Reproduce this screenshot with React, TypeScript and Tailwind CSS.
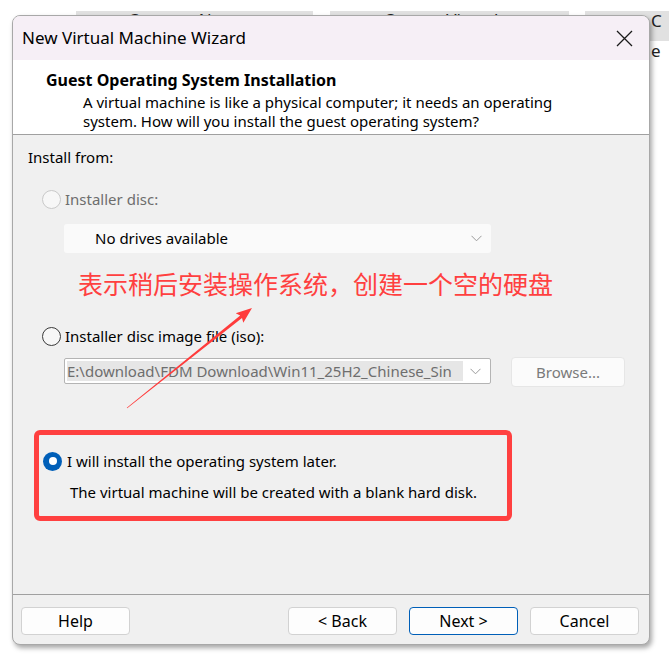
import React from "react";

function Chevron() {
  return (
    <svg width="11" height="7" viewBox="0 0 11 7" className="shrink-0">
      <path d="M0.5 0.8 L5.5 5.8 L10.5 0.8" fill="none" stroke="#9a9a9a" strokeWidth="1" />
    </svg>
  );
}

function Radio({ state }: { state: "disabled" | "off" | "on" }) {
  if (state === "on") {
    return (
      <span className="w-[19px] h-[19px] rounded-full bg-[#005fb8] flex items-center justify-center shrink-0">
        <span className="w-[8px] h-[8px] rounded-full bg-white" />
      </span>
    );
  }
  return (
    <span
      className={
        state === "disabled"
          ? "w-[19px] h-[19px] rounded-full border border-[#c9c9c9] bg-[#f7f7f7] shrink-0"
          : "w-[19px] h-[19px] rounded-full border border-[#3a3a3a] bg-[#f7f7f7] shrink-0"
      }
    />
  );
}

function Btn({ label, primary }: { label: string; primary?: boolean }) {
  return (
    <button
      className={
        primary
          ? "w-[109px] h-[28px] rounded-[4px] border border-[#005fb8] bg-[#fdfdfd] text-[16px] text-black flex items-center justify-center"
          : "w-[109px] h-[28px] rounded-[4px] border border-[#d2d2d2] bg-[#fdfdfd] text-[16px] text-black flex items-center justify-center"
      }
    >
      {label}
    </button>
  );
}

export default function App() {
  return (
    <div className="relative w-[669px] h-[666px] bg-white overflow-hidden font-['Noto_Sans','Noto_Sans_CJK_SC',sans-serif]">
      {/* background window tabs peeking above the dialog */}
      <div className="absolute top-[11px] left-[76px] w-[237px] h-[30px] bg-[#e1e1e1] text-[17px] text-[#222] leading-[18px] pl-[52px]">
        Create a New
      </div>
      <div className="absolute top-[11px] left-[330px] w-[239px] h-[30px] bg-[#e1e1e1] text-[17px] text-[#222] leading-[18px] pl-[54px]">
        Open a Virtual
      </div>
      <div className="absolute top-[11px] left-[585px] w-[84px] h-[30px] bg-[#e1e1e1]" />
      <div className="absolute top-[6px] left-[651px] text-[17px] leading-[30px] text-[#222]">
        <div>C</div>
        <div>e</div>
      </div>

      {/* dialog */}
      <div className="relative ml-[12px] mt-[15px] w-[638px] h-[630px] flex flex-col bg-[#f0f0f0] rounded-[8px] border border-[#a8a8a8] shadow-[2px_3px_5px_rgba(0,0,0,0.35)] overflow-hidden">
        <div className="h-[44px] shrink-0 bg-[#f6eff6] flex items-center justify-between pl-[9px] pr-[16px]">
          <span className="text-[17px] text-black">New Virtual Machine Wizard</span>
          <svg width="17" height="17" viewBox="0 0 17 17">
            <path d="M1 1 L16 16 M16 1 L1 16" stroke="#1a1a1a" strokeWidth="1.3" />
          </svg>
        </div>

        <div className="h-[75px] shrink-0 bg-white border-b border-[#a0a0a0] pt-[10px]">
          <div className="pl-[33px] text-[16px] font-bold leading-[20px] text-black">
            Guest Operating System Installation
          </div>
          <div className="pl-[70px] mt-[3px] text-[15px] leading-[19px] text-black">
            <div>A virtual machine is like a physical computer; it needs an operating</div>
            <div>system. How will you install the guest operating system?</div>
          </div>
        </div>

        <div className="flex-1 flex flex-col pl-[15px] pt-[12px] text-[15px] text-black">
          <div className="leading-[20px]">Install from:</div>

          <div className="mt-[21px] h-[22px] ml-[14px] flex items-center gap-[4px]">
            <Radio state="disabled" />
            <span className="text-[#6d6d6d]">Installer disc:</span>
          </div>

          <div className="mt-[14px] ml-[36px] w-[427px] h-[29px] bg-[#fafafa] rounded-[3px] flex items-center justify-between pl-[31px] pr-[9px]">
            <span>No drives available</span>
            <Chevron />
          </div>

          <div className="mt-[15px] ml-[50px] h-[30px] leading-[30px] text-[25px] text-[#ff4040] font-['Noto_Sans_CJK_SC',sans-serif]">
            表示稍后安装操作系统，创建一个空的硬盘
          </div>

          <div className="mt-[27px] h-[22px] ml-[14px] flex items-center gap-[4px]">
            <Radio state="off" />
            <span>Installer disc image file (iso):</span>
          </div>

          <div className="mt-[10px] ml-[36px] flex items-start">
            <div className="mt-[1px] w-[427px] h-[26px] bg-white border border-[#b4b4b4] rounded-[2px] flex items-center justify-between pl-[2px] pr-[9px]">
              <span className="w-[396px] h-[20px] overflow-hidden whitespace-nowrap bg-[#e6e6e6] text-[#6e6e6e] leading-[20px]">
                E:\download\FDM Download\Win11_25H2_Chinese_Sin
              </span>
              <Chevron />
            </div>
            <div className="ml-[20px] w-[114px] h-[30px] rounded-[4px] border border-[#e6e6e6] bg-[#fbfbfb] text-[#7a7a7a] flex items-center justify-center">
              Browse...
            </div>
          </div>

          <div className="mt-[43px] ml-[6px] w-[478px] h-[91px] border-[5px] border-[#ff4040] rounded-[6px] pl-[4px] pt-[15px]">
            <div className="h-[22px] flex items-center gap-[5px]">
              <Radio state="on" />
              <span>I will install the operating system later.</span>
            </div>
            <div className="mt-[9px] ml-[27px] leading-[22px]">
              The virtual machine will be created with a blank hard disk.
            </div>
          </div>
        </div>

        <div className="h-[50px] shrink-0 border-t border-[#a0a0a0] flex items-start pt-[12px] pl-[8px] pr-[10px]">
          <Btn label="Help" />
          <div className="flex-1" />
          <div className="flex gap-[12px]">
            <Btn label="< Back" />
            <Btn label="Next >" primary />
            <Btn label="Cancel" />
          </div>
        </div>
      </div>

      {/* annotation arrow */}
      <svg className="absolute left-0 top-0 pointer-events-none" width="669" height="666" viewBox="0 0 669 666">
        <polygon
          points="126.8,407.8 240.2,315.6 235.7,313.3 252,308 243.3,322.7 242,317.9 127.2,408.2"
          fill="#ff3b3b"
        />
      </svg>
    </div>
  );
}
